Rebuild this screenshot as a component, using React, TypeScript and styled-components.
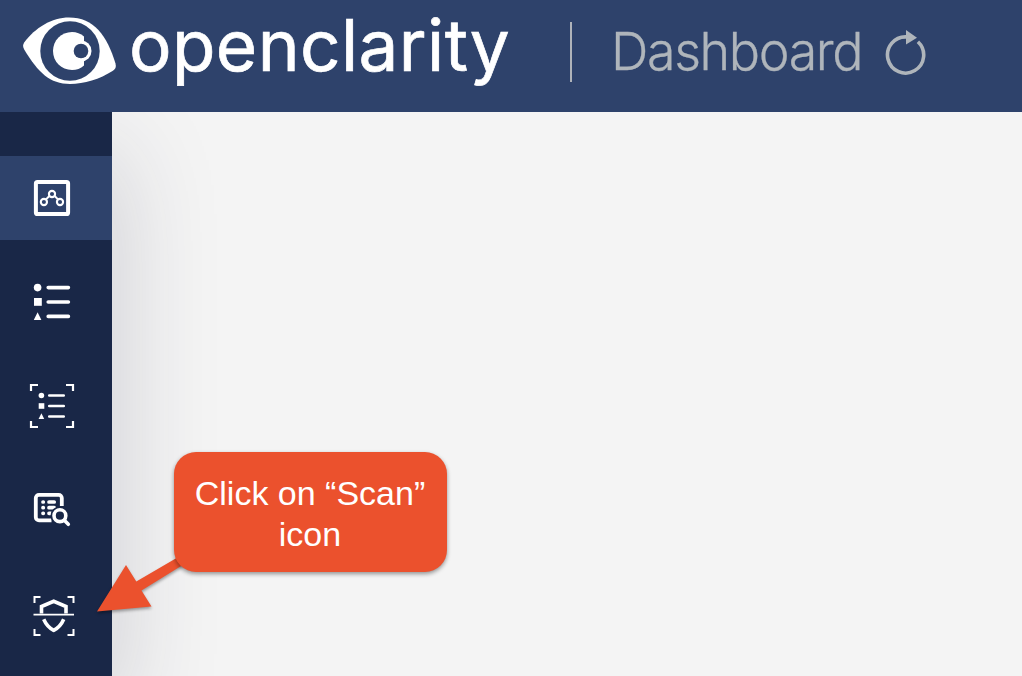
import React from "react";
import styled, { createGlobalStyle } from "styled-components";

const GlobalStyle = createGlobalStyle`
  * { box-sizing: border-box; }
  body { margin: 0; background: #f4f4f4; overflow: hidden; }
`;

const Page = styled.div`
  position: relative;
  display: flex;
  flex-direction: column;
  width: 100%;
  height: 100vh;
  min-height: 676px;
  overflow: hidden;
  background: #f4f4f4;
  font-family: Inter, "Liberation Sans", sans-serif;
`;

const Header = styled.header`
  display: flex;
  align-items: center;
  flex: none;
  height: 112px;
  padding: 0 0 8px 22px;
  background: #2e426b;
  z-index: 1;
`;

const EyeLogo = styled.svg`
  flex: none;
  width: 96px;
  height: 72px;
  margin-top: -2px;
`;

const Wordmark = styled.span`
  width: 377px;
  margin: -14px 0 0 11px;
  color: #fff;
  font-size: 71px;
  font-weight: 400;
  line-height: 84px;
  letter-spacing: 0.4px;
  -webkit-text-stroke: 0.7px #fff;
  white-space: nowrap;
`;

const Divider = styled.span`
  width: 2px;
  height: 60px;
  margin-left: 64px;
  background: #afb3ba;
`;

const PageTitle = styled.h1`
  width: 252px;
  margin: 0 0 0 39px;
  color: #afb5bb;
  font-size: 52px;
  font-weight: 300;
  line-height: 64px;
  letter-spacing: -1.4px;
  -webkit-text-stroke: 0.3px #afb5bb;
  white-space: nowrap;
`;

const RefreshIcon = styled.svg`
  flex: none;
  width: 44px;
  height: 48px;
  margin-left: 21px;
`;

const Body = styled.div`
  display: flex;
  flex: 1;
`;

const Sidebar = styled.nav`
  display: flex;
  flex-direction: column;
  gap: 20px;
  width: 112px;
  padding-top: 44px;
  background: #192747;
  box-shadow: 8px 40px 100px rgba(35, 37, 66, 0.17);
`;

const NavItem = styled.a<{ $active?: boolean }>`
  display: flex;
  align-items: center;
  height: 84px;
  flex: none;
  padding-left: 28px;
  background: ${({ $active }) => ($active ? "#2e426b" : "transparent")};
`;

const NavIcon = styled.svg`
  width: 48px;
  height: 48px;
`;

const Content = styled.main`
  flex: 1;
`;

const Callout = styled.div`
  position: absolute;
  left: 174px;
  top: 452px;
  display: flex;
  align-items: center;
  justify-content: center;
  width: 273px;
  height: 120px;
  padding: 4px 1px 0 0;
  border-radius: 22px;
  background: #eb512d;
  box-shadow: 0 2px 4px rgba(0, 0, 0, 0.4);
  color: #fff;
  font-family: "Liberation Sans", Arial, sans-serif;
  font-size: 34px;
  line-height: 41px;
  text-align: center;
`;

const CalloutArrow = styled.svg`
  position: absolute;
  left: 90px;
  top: 550px;
  width: 110px;
  height: 72px;
  filter: drop-shadow(0 2px 1.5px rgba(0, 0, 0, 0.35));
`;

const DashboardIcon = () => (
  <NavIcon viewBox="28 174 48 48" fill="none" stroke="#fff">
    <rect x="35.9" y="181.9" width="32.2" height="32.2" rx="1.6" strokeWidth="4" />
    <path d="M46 199.4l3.6-3.6M54.4 195.8l3.6 3.6" strokeWidth="2" />
    <circle cx="52" cy="194" r="3.1" strokeWidth="2.1" />
    <circle cx="43.9" cy="202" r="3.1" strokeWidth="2.1" />
    <circle cx="60" cy="202" r="3.1" strokeWidth="2.1" />
  </NavIcon>
);

const ListIcon = () => (
  <NavIcon viewBox="28 278 48 48" fill="#fff">
    <circle cx="37.6" cy="287.6" r="3.8" />
    <rect x="34" y="298" width="7.8" height="7.8" />
    <path d="M37.6 312.3l3.8 7.7h-7.6z" />
    <path d="M48.2 287.6h20.2M48.2 302h20.2M48.2 316.4h20.2" stroke="#fff" strokeWidth="3.6" strokeLinecap="round" />
  </NavIcon>
);

const ScopeListIcon = () => (
  <NavIcon viewBox="28 382 48 48" fill="#fff">
    <path d="M31 391v-6h7M66 385h7v6M73 421v6h-7M38 427h-7v-6" fill="none" stroke="#fff" strokeWidth="2.2" />
    <circle cx="41.4" cy="395.5" r="2.8" />
    <rect x="38.7" y="403.2" width="5.6" height="5.6" />
    <path d="M41.4 413.3l2.8 5.6h-5.6z" />
    <path d="M49.3 395.5h14.4M49.3 406h14.4M49.3 416.5h14.4" stroke="#fff" strokeWidth="2.7" strokeLinecap="round" />
  </NavIcon>
);

const FindingsIcon = () => (
  <NavIcon viewBox="28 486 48 48" fill="none" stroke="#fff" strokeLinecap="round">
    <path d="M51.5 520.4H39a3.2 3.2 0 0 1-3.2-3.2V498a3.2 3.2 0 0 1 3.2-3.2h19.6a3.2 3.2 0 0 1 3.2 3.2v8" strokeWidth="3.8" strokeLinecap="butt" />
    <path d="M43 502h.3M43 507.7h.3M43 513.3h.3M49 502h5.2M49 507.7h5.2M49 513.3h2" strokeWidth="3.7" />
    <circle cx="59.9" cy="515.7" r="9.4" fill="#192747" stroke="none" />
    <circle cx="59.9" cy="515.7" r="5.9" strokeWidth="3.6" />
    <path d="M64.3 520.3l4 4" strokeWidth="3.6" />
  </NavIcon>
);

const ScanIcon = () => (
  <NavIcon viewBox="28 590 48 48" fill="none" stroke="#fff">
    <path d="M34.5 603v-6h6M67.5 597h6v6M73.5 629v6h-6M40.5 635h-6v-6" strokeWidth="2" />
    <path d="M41.5 613.5V606.5L53.7 601.3L66 606.5V613.5" strokeWidth="3.6" />
    <path d="M43.7 619.2C45.8 624 49.3 628 53.7 630.3C58.1 628 61.7 624 63.7 619.2" strokeWidth="3.6" />
    <path d="M33.5 614.7h40.5" strokeWidth="1.8" />
  </NavIcon>
);

export default function App() {
  return (
    <Page>
      <GlobalStyle />
      <Header>
        <EyeLogo viewBox="22 15 96 72" aria-label="eye">
          <path
            d="M24.2 42.5C35 27.5 52 17.4 69 17.4C94 17.4 107 35.5 115.5 63.5C116.3 67.5 115.5 69 112.5 71C100 79 84 84 70 84C50 84 38 72.5 24.2 49.5C22.7 46.5 22.7 45 24.2 42.5Z"
            fill="#fff"
          />
          <ellipse cx="70" cy="51" rx="29.7" ry="29.8" fill="#2e426b" />
          <path d="M84 36.5C80.7 33.5 76.5 32 72 32C61.3 32 53 40.5 53 51C53 61.5 61.3 70 72 70C76.5 70 80.7 68.5 84 65.5Z" fill="#fff" />
          <circle cx="81" cy="51" r="10.5" fill="#fff" />
          <circle cx="81" cy="51" r="7.3" fill="#2e426b" />
        </EyeLogo>
        <Wordmark>openclarity</Wordmark>
        <Divider />
        <PageTitle>Dashboard</PageTitle>
        <RefreshIcon viewBox="884 28 44 48">
          <path d="M917.9 41.7A18.1 18.1 0 1 1 906.5 36.9" fill="none" stroke="#afb5bb" strokeWidth="3.6" />
          <path d="M906 30L917 37.8L906 44.5Z" fill="#afb5bb" />
        </RefreshIcon>
      </Header>
      <Body>
        <Sidebar>
          <NavItem $active><DashboardIcon /></NavItem>
          <NavItem><ListIcon /></NavItem>
          <NavItem><ScopeListIcon /></NavItem>
          <NavItem><FindingsIcon /></NavItem>
          <NavItem><ScanIcon /></NavItem>
        </Sidebar>
        <Content />
      </Body>
      <CalloutArrow viewBox="90 550 110 72" fill="#eb512d">
        <path d="M97 611.5L126 565L136.3 581.5L180 556L186 563L141.5 590.5L151.5 606.5Z" />
      </CalloutArrow>
      <Callout>
        <span>Click on “Scan”<br />icon</span>
      </Callout>
    </Page>
  );
}
